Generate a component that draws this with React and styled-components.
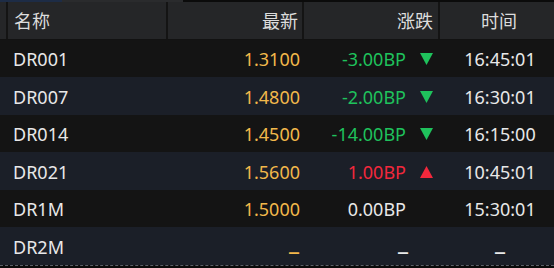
import React from 'react'
import styled, { createGlobalStyle } from 'styled-components'

const GlobalStyle = createGlobalStyle`
  html, body { margin: 0; padding: 0; background: #0b0b0b; }
  body { font-family: "Noto Sans", "Noto Sans CJK SC", sans-serif; }
`

const COLS = '168px 136px 136px 1fr'

const Wrap = styled.div`
  width: 554px;
  height: 268px;
  overflow: hidden;
  background: #0b0b0b;
  display: flex;
  flex-direction: column;
`

const TabStrip = styled.div`
  height: 2px;
  display: flex;
`

const TabPiece = styled.div`
  width: ${p => p.w}px;
  background: ${p => p.bg};
`

const HeaderRow = styled.div`
  display: grid;
  grid-template-columns: ${COLS};
  height: 37px;
  background: #252628;
  border-bottom: 1px solid #121212;
`

const HeadCell = styled.div`
  display: flex;
  align-items: center;
  justify-content: ${p => p.align || 'flex-start'};
  border-right: 2px solid #141414;
  border-left: ${p => (p.first ? '2px solid #141414' : 'none')};
  margin-left: ${p => (p.first ? '6px' : '0')};
  padding: 0 ${p => p.pr || 0}px 0 ${p => p.pl || 0}px;
  font-size: 18px;
  color: #dcdcdc;
  &:last-child { border-right: none; }
`

const Row = styled.div`
  display: grid;
  grid-template-columns: ${COLS};
  height: 37.7px;
  background: ${p => (p.alt ? '#1b1f28' : '#141414')};
`

const Cell = styled.div`
  display: flex;
  align-items: center;
  justify-content: ${p => p.align || 'flex-start'};
  padding: 1px ${p => p.pr || 0}px 0 ${p => p.pl || 0}px;
  font-size: 18px;
  color: ${p => p.color || '#e8e8e8'};
  white-space: nowrap;
`

const Arrow = styled.span`
  width: 13px;
  height: 12px;
  margin-left: 14px;
  display: inline-flex;
`

const Dash = styled.span`
  font-size: 24px;
  line-height: 1;
  position: relative;
  top: 3px;
`

const BottomLine = styled.div`
  height: 2px;
  border-top: 1px dashed #5a5e66;
`

const GREEN = '#1fc25c'
const RED = '#f2283c'
const GOLD = '#f2b84b'

const rows = [
  { name: 'DR001', price: '1.3100', chg: '-3.00BP', dir: -1, time: '16:45:01' },
  { name: 'DR007', price: '1.4800', chg: '-2.00BP', dir: -1, time: '16:30:01' },
  { name: 'DR014', price: '1.4500', chg: '-14.00BP', dir: -1, time: '16:15:00' },
  { name: 'DR021', price: '1.5600', chg: '1.00BP', dir: 1, time: '10:45:01' },
  { name: 'DR1M', price: '1.5000', chg: '0.00BP', dir: 0, time: '15:30:01' },
  { name: 'DR2M', price: null, chg: null, dir: 0, time: null },
]

function Tri({ dir }) {
  const color = dir > 0 ? RED : GREEN
  return (
    <Arrow style={{ visibility: dir === 0 ? 'hidden' : 'visible' }}>
      <svg width="13" height="12" viewBox="0 0 13 12">
        {dir > 0
          ? <polygon points="6.5,0 13,12 0,12" fill={color} />
          : <polygon points="0,0 13,0 6.5,12" fill={color} />}
      </svg>
    </Arrow>
  )
}

export default function App() {
  return (
    <Wrap>
      <GlobalStyle />
      <TabStrip>
        <TabPiece w={62} bg="#1d2c46" />
        <TabPiece w={121} bg="#2a2b2d" />
      </TabStrip>
      <HeaderRow>
        <HeadCell first pl={6}>名称</HeadCell>
        <HeadCell align="flex-end" pr={4}>最新</HeadCell>
        <HeadCell align="flex-end" pr={5}>涨跌</HeadCell>
        <HeadCell align="center" pl={4}>时间</HeadCell>
      </HeaderRow>
      {rows.map((r, i) => {
        const chgColor = r.dir < 0 ? GREEN : r.dir > 0 ? RED : '#e8e8e8'
        return (
          <Row key={r.name} alt={i % 2 === 1}>
            <Cell pl={13}>{r.name}</Cell>
            <Cell align="flex-end" pr={4} color={GOLD}>
              {r.price || <Dash>–</Dash>}
            </Cell>
            <Cell align="flex-end" pr={7} color={chgColor}>
              {r.chg ? (
                <>
                  {r.chg}
                  <Tri dir={r.dir} />
                </>
              ) : (
                <>
                  <Dash>–</Dash>
                  <Arrow style={{ width: 10, marginLeft: 14 }} />
                </>
              )}
            </Cell>
            <Cell align="center" pl={6}>
              {r.time || <Dash>–</Dash>}
            </Cell>
          </Row>
        )
      })}
      <BottomLine />
    </Wrap>
  )
}
